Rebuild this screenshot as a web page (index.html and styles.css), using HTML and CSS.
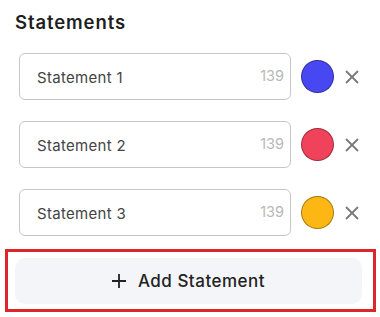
FILE: index.html
```html
<!DOCTYPE html>
<html>
<head>
<meta charset="utf-8">
<link rel="stylesheet" href="styles.css">
</head>
<body>
<div class="panel">
  <h2 class="title">Statements</h2>
  <div class="list">
    <div class="row">
      <div class="field"><span class="label">Statement 1</span><span class="count">139</span></div>
      <span class="swatch blue"></span>
      <svg class="remove" viewBox="0 0 14 14"><path d="M1 1L13 13M13 1L1 13"/></svg>
    </div>
    <div class="row">
      <div class="field"><span class="label">Statement 2</span><span class="count">139</span></div>
      <span class="swatch red"></span>
      <svg class="remove" viewBox="0 0 14 14"><path d="M1 1L13 13M13 1L1 13"/></svg>
    </div>
    <div class="row">
      <div class="field"><span class="label">Statement 3</span><span class="count">139</span></div>
      <span class="swatch yellow"></span>
      <svg class="remove" viewBox="0 0 14 14"><path d="M1 1L13 13M13 1L1 13"/></svg>
    </div>
  </div>
  <div class="highlight">
    <button class="add"><svg class="plus" viewBox="0 0 14 14"><path d="M7 0V14M0 7H14"/></svg><span>Add Statement</span></button>
  </div>
</div>
</body>
</html>
```
FILE: styles.css
```css
* { box-sizing: border-box; }
html, body { margin: 0; padding: 0; background: #fff; }
body { font-family: Inter, "Noto Sans", sans-serif; color: #222; }
.panel { width: 380px; height: 317px; padding: 10px 0 0 0; }
.title { margin: 0 0 0 15px; font-size: 18.5px; font-weight: 600; line-height: 24px; color: #1f1f1f; letter-spacing: 0.9px; }
.list { display: flex; flex-direction: column; gap: 21px; padding: 19px 0 0 19px; }
.row { display: flex; align-items: center; height: 47px; }
.field { width: 272px; height: 47px; border: 1px solid #c6c6c6; border-radius: 6px; display: flex; align-items: center; justify-content: space-between; padding: 0 6px 0 17px; }
.label { font-size: 15px; color: #444; margin-top: 2px; letter-spacing: 0.3px; }
.count { font-size: 14.5px; color: #b8b8b8; margin-top: -3px; }
.swatch { width: 33px; height: 33px; border-radius: 50%; margin-left: 10px; border: 1px solid rgba(0,0,0,0.35); }
.blue { background: #4848f2; }
.red { background: #f0425a; }
.yellow { background: #fdb714; }
.remove { width: 14px; height: 14px; margin-left: 11px; fill: none; stroke: #7a7a7a; stroke-width: 1.8; }
.highlight { margin: 13px 0 0 5px; width: 371px; height: 63px; border: 3px solid #e0242b; padding: 6px 11px 5px 7px; }
.add { width: 100%; height: 100%; border: none; border-radius: 10px; background: #f3f5f8; display: flex; align-items: center; justify-content: center; gap: 12px; font-family: inherit; font-size: 17px; font-weight: 500; color: #222; padding: 0; letter-spacing: 0.5px; }
.plus { width: 14px; height: 14px; fill: none; stroke: #222; stroke-width: 1.8; }
```
